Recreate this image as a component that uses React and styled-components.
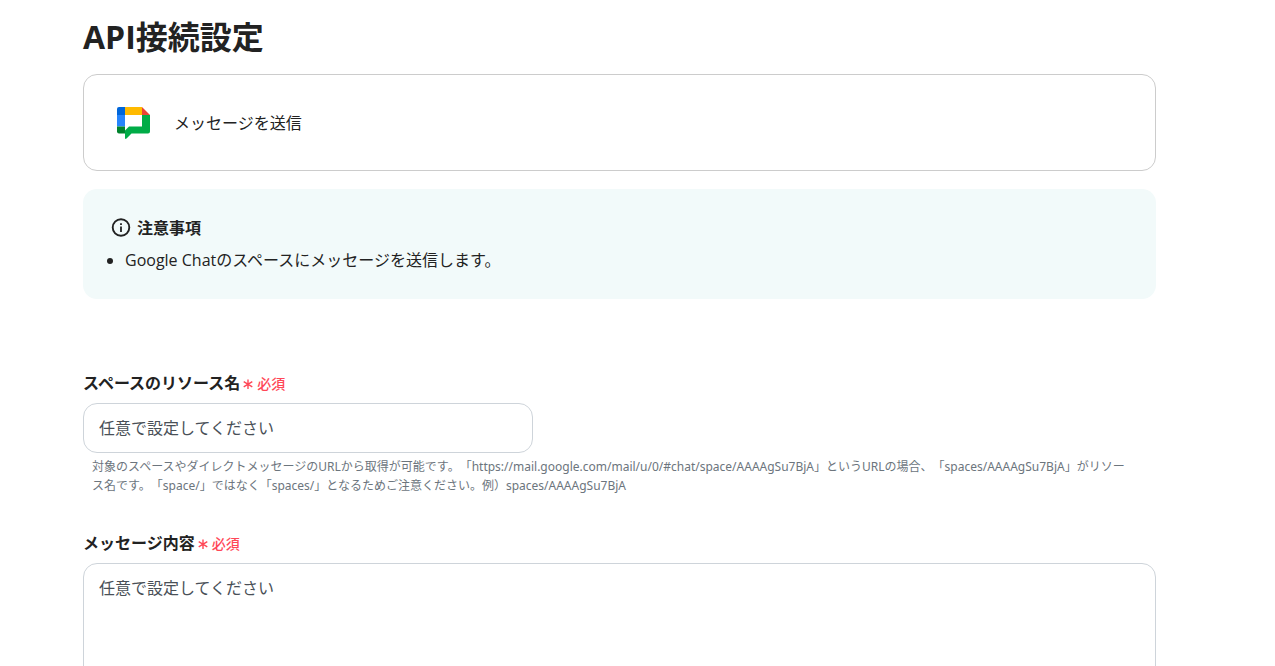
import React, { useState } from "react";
import styled, { createGlobalStyle } from "styled-components";

const GlobalStyle = createGlobalStyle`
  *,
  *::before,
  *::after {
    box-sizing: border-box;
  }

  body {
    margin: 0;
    background-color: #ffffff;
    color: #222222;
    font-family: "Open Sans", "Noto Sans CJK JP", sans-serif;
    font-size: 16px;
    line-height: 24px;
  }
`;

const Page = styled.main`
  padding: 16px 119px 32px 83px;
`;

const Title = styled.h1`
  margin: 0 0 16px;
  font-size: 32px;
  font-weight: 700;
  line-height: 42px;
`;

const ActionCard = styled.section`
  display: flex;
  align-items: center;
  gap: 24px;
  height: 97px;
  padding: 0 33px;
  border: 1px solid #cccccc;
  border-radius: 14px;
`;

const Notice = styled.section`
  margin-top: 18px;
  padding: 27px 28px;
  border-radius: 14px;
  background-color: #f2fafa;
`;

const NoticeTitle = styled.h2`
  display: flex;
  align-items: center;
  gap: 6px;
  margin: 0 0 8px;
  font-size: 16px;
  font-weight: 700;
  line-height: 24px;
`;

const NoticeList = styled.ul`
  margin: 0;
  padding-left: 14px;
`;

const Form = styled.form`
  display: flex;
  flex-direction: column;
  gap: 36px;
  margin-top: 72px;
`;

const Field = styled.div`
  display: flex;
  flex-direction: column;
`;

const Label = styled.label`
  display: flex;
  align-items: center;
  gap: 3px;
  margin-bottom: 8px;
  font-weight: 700;
`;

const Required = styled.span`
  display: inline-flex;
  align-items: center;
  gap: 4px;
  padding-top: 2px;
  color: #ff4757;
  font-size: 14px;
  font-weight: 500;
  line-height: 22px;
`;

const TextInput = styled.input`
  width: 450px;
  max-width: 100%;
  height: 50px;
  padding: 0 15px;
  border: 1px solid #ced4da;
  border-radius: 14px;
  background-color: #ffffff;
  color: #222222;
  font: inherit;

  &::placeholder {
    color: #495057;
    opacity: 1;
  }
`;

const TextArea = styled(TextInput)`
  display: block;
  width: 100%;
  height: 200px;
  padding: 12px 15px;
  resize: none;
`;

const HelpText = styled.p`
  margin: 4px 0 0;
  padding: 0 24px 0 9px;
  color: #6c757d;
  font-family: "Noto Sans", "Noto Sans CJK JP", sans-serif;
  font-size: 12px;
  line-height: 19px;
  text-spacing-trim: space-all;
`;

const ChatLogo = () => (
  <svg width="33" height="34" viewBox="0 0 33 34" aria-hidden="true">
    <path d="M8 1H2Q0 1 0 3V9H8Z" fill="#0066da" />
    <path d="M0 9H8V20.500H0Z" fill="#2684fc" />
    <path d="M0 20.500H8V27.500H2Q0 27.500 0 25.500Z" fill="#00832d" />
    <path d="M8 1H25V9H8Z" fill="#ffba00" />
    <path d="M25 1L33 9H25Z" fill="#ea4335" />
    <path
      d="M25 9H33V25.500Q33 27.500 31 27.500H14.500L9.500 32.500Q8 33.700 8 32V24.500L12 20.500H25Z"
      fill="#00ac47"
    />
  </svg>
);

const InfoIcon = () => (
  <svg width="20" height="20" viewBox="0 0 20 20" aria-hidden="true">
    <circle cx="10" cy="9.500" r="8.300" fill="none" stroke="#222222" strokeWidth="1.900" />
    <path d="M9.100 8.500H10.900V14H9.100ZM9.100 5.200H10.900V7H9.100Z" fill="#222222" />
  </svg>
);

const AsteriskIcon = () => (
  <svg width="10" height="12" viewBox="0 0 10 12" aria-hidden="true">
    <path
      d="M5 1.500V11M0.700 3.700L9.300 8.800M9.300 3.700L0.700 8.800"
      stroke="currentColor"
      strokeWidth="1.400"
      fill="none"
    />
  </svg>
);

const RequiredMark = () => (
  <Required>
    <AsteriskIcon />
    必須
  </Required>
);

const App = () => {
  const [spaceName, setSpaceName] = useState("");
  const [message, setMessage] = useState("");

  return (
    <>
      <GlobalStyle />
      <Page>
        <Title>API接続設定</Title>
        <ActionCard>
          <ChatLogo />
          <span>メッセージを送信</span>
        </ActionCard>
        <Notice>
          <NoticeTitle>
            <InfoIcon />
            注意事項
          </NoticeTitle>
          <NoticeList>
            <li>Google Chatのスペースにメッセージを送信します。</li>
          </NoticeList>
        </Notice>
        <Form>
          <Field>
            <Label htmlFor="space-name">
              スペースのリソース名
              <RequiredMark />
            </Label>
            <TextInput
              id="space-name"
              type="text"
              placeholder="任意で設定してください"
              value={spaceName}
              onChange={(event) => setSpaceName(event.target.value)}
            />
            <HelpText>
              対象のスペースやダイレクトメッセージのURLから取得が可能です。「https://mail.google.com/mail/u/0/#chat/space/AAAAgSu7BjA」というURLの場合、「spaces/AAAAgSu7BjA」がリソース名です。「space/」ではなく「spaces/」となるためご注意ください。例）spaces/AAAAgSu7BjA
            </HelpText>
          </Field>
          <Field>
            <Label htmlFor="message">
              メッセージ内容
              <RequiredMark />
            </Label>
            <TextArea
              as="textarea"
              id="message"
              placeholder="任意で設定してください"
              value={message}
              onChange={(event) => setMessage(event.target.value)}
            />
          </Field>
        </Form>
      </Page>
    </>
  );
};

export default App;
